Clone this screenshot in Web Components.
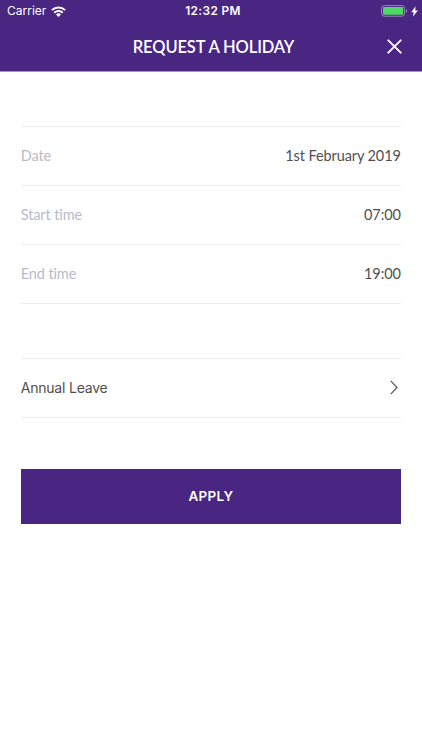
<!DOCTYPE html>
<html lang="en">
<head>
<meta charset="utf-8">
<title>Request a holiday</title>
<style>
    html, body {
        margin: 0;
        height: 100%;
        background: #fff;
    }
    body {
        --brand: #4a2683;
        --line: #eeeef3;
        --ink: #4f4f50;
        --muted: #b7bcc8;
    }
</style>
</head>
<body>
<holiday-screen>
    <status-bar slot="header" carrier="Carrier" time="12:32 PM"></status-bar>
    <nav-header slot="header">REQUEST A HOLIDAY</nav-header>
    <field-group>
        <field-row label="Date">1st February 2019</field-row>
        <field-row label="Start time">07:00</field-row>
        <field-row label="End time">19:00</field-row>
    </field-group>
    <field-group>
        <select-row>Annual Leave</select-row>
    </field-group>
    <apply-button>APPLY</apply-button>
</holiday-screen>

<script>
    // attach an open root and fill it from a template
    class BaseElement extends HTMLElement {
        constructor() {
            super();
            this.shadow = this.attachShadow({mode: 'open'});
            const template = document.createElement('template');
            template.innerHTML = this.constructor.markup;
            this.shadow.appendChild(template.content.cloneNode(true));
        }
    }

    class HolidayScreen extends BaseElement {
        static get markup() {
            return `
                <style>
                    :host {
                        display: block;
                        height: 750px;
                        overflow: hidden;
                        font-family: Lato, sans-serif;
                        font-variant-ligatures: none;
                    }
                    header {
                        height: 72px;
                        background: var(--brand);
                        color: #fff;
                        border-bottom: 1px solid #a493be;
                        box-sizing: border-box;
                    }
                    main {
                        display: flex;
                        flex-direction: column;
                        padding: 53.5px 20.7px 0;
                        gap: 53.5px;
                    }
                </style>
                <header><slot name="header"></slot></header>
                <main><slot></slot></main>
            `;
        }
    }

    class StatusBar extends BaseElement {
        static get markup() {
            return `
                <style>
                    :host {
                        display: grid;
                        grid-template-columns: 1fr auto 1fr;
                        align-items: center;
                        height: 22px;
                        padding: 0 4px 0 7px;
                        font: 12px/22px Inter, sans-serif;
                    }
                    .left, .right {
                        display: flex;
                        align-items: center;
                    }
                    .left { gap: 5px; }
                    .right { justify-content: flex-end; gap: 3px; }
                    .time {
                        padding-left: 1px;
                        font-weight: 600;
                        font-size: 11.8px;
                        letter-spacing: .4px;
                    }
                    svg { display: block; }
                </style>
                <div class="left">
                    <span class="carrier"></span>
                    <svg width="15" height="11" viewBox="0 0 15 11" fill="none" stroke="#fff" stroke-width="2">
                        <path d="M.9 4.1a9.4 9.4 0 0 1 13.2 0M3.3 6.7a6 6 0 0 1 8.4 0"/>
                        <path d="M5 8.4a3.6 3.6 0 0 1 5 0L7.5 10.9z" fill="#fff" stroke="none"/>
                    </svg>
                </div>
                <span class="time"></span>
                <div class="right">
                    <svg width="27" height="12" viewBox="0 0 27 12">
                        <rect x=".6" y=".6" width="23" height="10.6" rx="2.7" fill="none" stroke="#9d89bd"/>
                        <rect x="2" y="2" width="20.2" height="7.8" rx="1.4" fill="#4cd964"/>
                        <path d="M25 4v4c1.5-.6 1.5-3.4 0-4z" fill="#9d89bd"/>
                    </svg>
                    <svg width="7" height="11" viewBox="0 0 7 11">
                        <path d="M4.6.2.2 6.3h2.5L1.9 10.8 6.9 4.6H4.2z" fill="#fff"/>
                    </svg>
                </div>
            `;
        }

        connectedCallback() {
            this.shadow.querySelector('.carrier').textContent = this.getAttribute('carrier');
            this.shadow.querySelector('.time').textContent = this.getAttribute('time');
        }
    }

    class NavHeader extends BaseElement {
        static get markup() {
            return `
                <style>
                    :host {
                        display: grid;
                        grid-template-columns: 1fr auto 1fr;
                        align-items: center;
                        height: 48px;
                        padding: 0 20px 0 23px;
                        font-size: 16.5px;
                        font-weight: 600;
                        letter-spacing: -.12px;
                    }
                    h1 {
                        grid-column: 2;
                        margin: 0;
                        padding: 1px 0 0 2px;
                        font: inherit;
                        white-space: nowrap;
                    }
                    button {
                        justify-self: end;
                        padding: 0;
                        border: 0;
                        background: none;
                    }
                    svg { display: block; }
                </style>
                <h1><slot></slot></h1>
                <button aria-label="Close">
                    <svg width="15" height="15" viewBox="0 0 15 15" fill="none" stroke="#fff" stroke-width="1.9" stroke-linecap="round">
                        <path d="M1.3 1.3l12.4 12.4M13.7 1.3L1.3 13.7"/>
                    </svg>
                </button>
            `;
        }
    }

    class FieldGroup extends BaseElement {
        static get markup() {
            return `
                <style>
                    :host {
                        display: block;
                        border-top: 1px solid var(--line);
                    }
                    ::slotted(*) {
                        box-sizing: border-box;
                        height: 59.2px;
                        border-bottom: 1px solid var(--line);
                    }
                </style>
                <slot></slot>
            `;
        }
    }

    class FieldRow extends BaseElement {
        static get markup() {
            return `
                <style>
                    :host {
                        display: flex;
                        align-items: center;
                        justify-content: space-between;
                        padding-right: .5px;
                        font-size: 14.5px;
                        letter-spacing: -.1px;
                        color: var(--ink);
                    }
                    .label { color: var(--muted); }
                </style>
                <span class="label"></span>
                <span><slot></slot></span>
            `;
        }

        connectedCallback() {
            this.shadow.querySelector('.label').textContent = this.getAttribute('label');
        }
    }

    class SelectRow extends BaseElement {
        static get markup() {
            return `
                <style>
                    :host {
                        display: flex;
                        align-items: center;
                        justify-content: space-between;
                        padding-right: 3px;
                        font: 14px Inter, sans-serif;
                        letter-spacing: -.2px;
                        color: var(--ink);
                    }
                    svg { display: block; }
                </style>
                <span><slot></slot></span>
                <svg width="8" height="15" viewBox="0 0 8 15" fill="none" stroke="#555" stroke-width="1.2">
                    <path d="M.8 .9l6.2 6.6-6.2 6.6"/>
                </svg>
            `;
        }
    }

    class ApplyButton extends BaseElement {
        static get markup() {
            return `
                <style>
                    :host {
                        display: block;
                        margin-top: -2.5px;
                    }
                    button {
                        display: block;
                        width: 100%;
                        height: 55px;
                        padding: 0;
                        border: 0;
                        background: var(--brand);
                        color: #fff;
                        font: 600 13.5px Inter, sans-serif;
                        letter-spacing: .3px;
                    }
                </style>
                <button><slot></slot></button>
            `;
        }
    }

    window.customElements.define('holiday-screen', HolidayScreen);
    window.customElements.define('status-bar', StatusBar);
    window.customElements.define('nav-header', NavHeader);
    window.customElements.define('field-group', FieldGroup);
    window.customElements.define('field-row', FieldRow);
    window.customElements.define('select-row', SelectRow);
    window.customElements.define('apply-button', ApplyButton);
</script>
</body>
</html>
